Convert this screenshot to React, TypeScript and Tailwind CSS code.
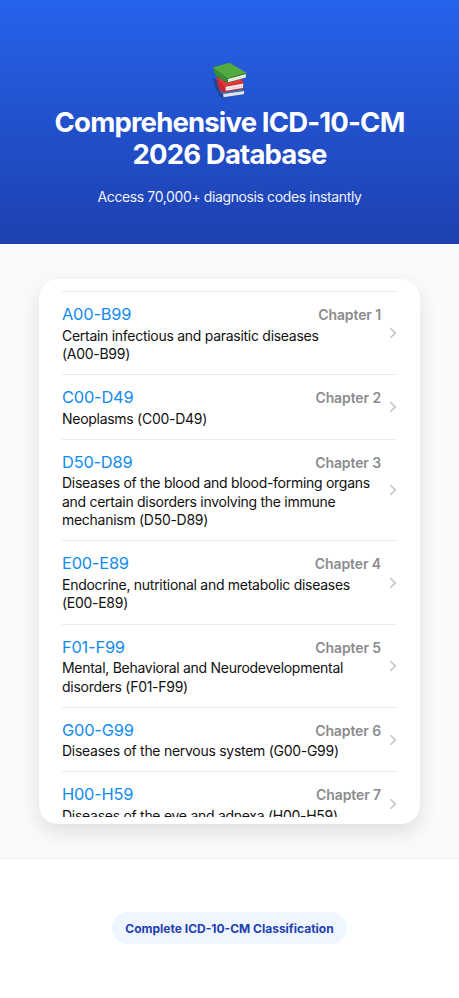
type Chapter = { code: string; lines: string[] };

const chapters: Chapter[] = [
  { code: "A00-B99", lines: ["Certain infectious and parasitic diseases", "(A00-B99)"] },
  { code: "C00-D49", lines: ["Neoplasms (C00-D49)"] },
  {
    code: "D50-D89",
    lines: [
      "Diseases of the blood and blood-forming organs",
      "and certain disorders involving the immune",
      "mechanism (D50-D89)",
    ],
  },
  { code: "E00-E89", lines: ["Endocrine, nutritional and metabolic diseases", "(E00-E89)"] },
  { code: "F01-F99", lines: ["Mental, Behavioral and Neurodevelopmental", "disorders (F01-F99)"] },
  { code: "G00-G99", lines: ["Diseases of the nervous system (G00-G99)"] },
  { code: "H00-H59", lines: ["Diseases of the eye and adnexa (H00-H59)"] },
];

function Books() {
  return (
    <svg width="38" height="38" viewBox="0 0 38 38" aria-hidden="true">
      <path d="M1.5 17.5 L5 18 L8 26 L33.5 28 L33.5 33.5 L12 37 L8.5 35 L5.5 29Z" fill="#23438f" />
      <path d="M8 30 L33 28 L33.5 30 L11.5 33Z" fill="#3f6cba" />
      <path d="M12 33 L33.3 30 L33 33.2 L12.6 36.2Z" fill="#dfe4ec" />
      <path d="M5.3 16 L9 15 L30 18.5 L32.5 21.5 L32.3 28 L12 31.3 L8 28.5Z" fill="#c92832" />
      <path d="M6.2 17.5 L30 18 L32.5 21.3 L13.5 25Z" fill="#e3363d" />
      <path d="M14.5 25.8 L32.3 22.5 L32 27 L14.8 29.8Z" fill="#f1e8e7" />
      <path d="M14.8 28 L32 25" stroke="#d2c4c6" strokeWidth=".5" />
      <path d="M2 7 L18.5 1.8 L35.3 12 L35 16.7 L16.3 22 L6 16Z" fill="#28742e" />
      <path d="M2 6.3 L18.5 1.8 L35.6 11.8 L16.3 17.3Z" fill="#53ab40" />
      <path d="M17 18 L35.1 13 L34.7 16.4 L17 21.2Z" fill="#f5f5f0" />
      <path d="M17.3 19.8 L34.8 14.9" stroke="#cbccc4" strokeWidth=".5" />
      <path d="M2 6.3 Q2 9.5 5 14.7 L16.3 22 L16.3 17.3Z" fill="#378e35" />
    </svg>
  );
}

function ChapterRow({ chapter, index }: { chapter: Chapter; index: number }) {
  return (
    <div className="flex items-center justify-between border-t border-[#ebecee] pt-[11px] pb-[10.65px]">
      <div className="w-[319px]">
        <div className="flex h-[23.5px] items-start justify-between">
          <span className="text-[16.4px] leading-[22px] tracking-[-0.2px] text-[#128bed]">{chapter.code}</span>
          <span className="pt-[2px] text-[14px] leading-[20px] font-semibold tracking-[-0.11px] text-[#8c8c8e]">
            Chapter {index + 1}
          </span>
        </div>
        <p className="text-[14px] leading-[18.5px] tracking-[-0.28px] whitespace-nowrap text-[#111]">
          {chapter.lines.map((line) => (
            <span key={line} className="block">{line}</span>
          ))}
        </p>
      </div>
      <svg width="8" height="12" viewBox="0 0 8 12" fill="none">
        <path d="M1.3 1.2 L6.3 6 L1.3 10.8" stroke="#c2c2c4" strokeWidth="1.5" />
      </svg>
    </div>
  );
}

export default function App() {
  return (
    <div className="flex h-[998px] w-[459px] flex-col bg-white font-['Inter','Liberation_Sans',sans-serif]">
      <header className="flex h-[243.5px] shrink-0 flex-col items-center bg-linear-to-b from-[#2563eb] to-[#1e40af] pt-[61px] text-white">
        <Books />
        <h1 className="mt-[8px] text-center text-[27.5px] leading-[31.5px] font-bold tracking-[-0.83px] whitespace-nowrap">
          Comprehensive ICD-10-CM
          <br />
          2026 Database
        </h1>
        <p className="mt-[16px] text-[14px] leading-[22px] tracking-[-0.39px] text-[#edf2ff]">
          Access 70,000+ diagnosis codes instantly
        </p>
      </header>
      <main className="flex h-[615px] shrink-0 justify-center border-b border-[#f0f2f4] bg-[#f9fafc] pt-[35.5px]">
        <section className="h-[545px] w-[381px] rounded-[19px] bg-white px-[23px] pt-[12px] pb-[7px] shadow-[0_8px_20px_rgba(0,0,0,0.11)]">
          <div className="h-full overflow-hidden">
            {chapters.map((chapter, index) => (
              <ChapterRow key={chapter.code} chapter={chapter} index={index} />
            ))}
          </div>
        </section>
      </main>
      <footer className="flex flex-1 items-center justify-center bg-white">
        <div className="flex h-8 w-[235px] items-center justify-center rounded-full bg-[#eff6ff] pt-px text-[12px] font-bold whitespace-nowrap text-[#1e40af]">
          Complete ICD-10-CM Classification
        </div>
      </footer>
    </div>
  );
}
